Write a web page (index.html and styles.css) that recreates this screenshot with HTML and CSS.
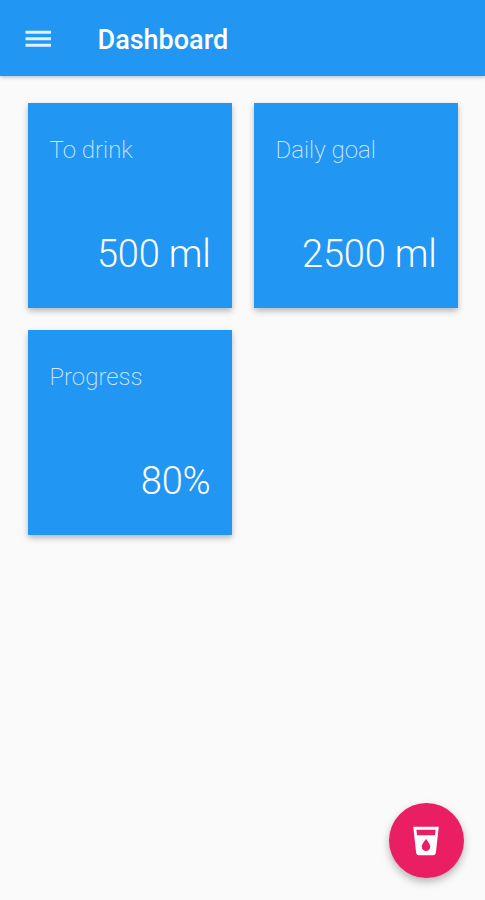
FILE: index.html
```html
<!DOCTYPE html>
<html lang="en">
<head>
<meta charset="utf-8">
<title>Dashboard</title>
<link rel="stylesheet" href="styles.css">
</head>
<body>
<header class="bar">
  <svg class="menu" viewBox="0 0 26 18" aria-hidden="true"><path d="M.5 .8h25.5v3H.5zM.5 7.3h25.5v3H.5zM.5 13.8h25.5v3H.5z"/></svg>
  <h1 class="title">Dashboard</h1>
</header>
<main class="grid">
  <section class="card"><h2 class="label">To drink</h2><p class="value">500 ml</p></section>
  <section class="card"><h2 class="label">Daily goal</h2><p class="value">2500 ml</p></section>
  <section class="card"><h2 class="label">Progress</h2><p class="value">80%</p></section>
</main>
<button class="fab" aria-label="Add drink">
  <svg class="cup" viewBox="0 0 24 24" aria-hidden="true"><path d="M3 2l2.01 18.23C5.13 21.23 5.97 22 7 22h10c1.03 0 1.87-.77 1.99-1.77L21 2H3zm9 17c-1.66 0-3-1.34-3-3 0-2 3-5.4 3-5.4s3 3.4 3 5.4c0 1.66-1.34 3-3 3zm6.33-11H5.67l-.44-4h13.55l-.45 4z"/></svg>
</button>
</body>
</html>
```
FILE: styles.css
```css
* { box-sizing: border-box; }
body {
  margin: 0;
  min-height: 900px;
  background: #fafafa;
  font-family: Roboto, sans-serif;
  color: #fff;
}
.bar {
  display: flex;
  align-items: center;
  height: 76px;
  padding-left: 25px;
  background: #2196f3;
  box-shadow: 0 1px 4px rgba(0, 0, 0, .28);
}
.menu { width: 26px; height: 18px; margin-top: 1px; fill: #e0f1fe; }
.title { margin: 3px 0 0 46.5px; font-size: 27px; line-height: 32px; font-weight: 500; }
.grid {
  display: grid;
  grid-template-columns: 204px 204px;
  grid-auto-rows: 205px;
  gap: 22px;
  padding: 27px 0 0 28px;
}
.card {
  display: flex;
  flex-direction: column;
  justify-content: space-between;
  padding: 32px 21.5px 31px;
  background: #2196f3;
  box-shadow: 0 3px 6px rgba(0, 0, 0, .27);
}
.label { margin: 0; font-size: 24px; line-height: 30px; font-weight: 200; opacity: .8; }
.value { margin: 0; font-size: 38px; line-height: 46px; font-weight: 300; letter-spacing: -.2px; text-align: right; }
.fab {
  position: fixed;
  left: 389px;
  top: 803px;
  width: 75px;
  height: 75px;
  display: grid;
  place-items: center;
  padding: 0;
  border: 0;
  border-radius: 50%;
  background: #e91e63;
  box-shadow: 0 4px 8px rgba(0, 0, 0, .28);
}
.cup { width: 34px; height: 34px; margin-right: 1px; fill: #fff; }
```
